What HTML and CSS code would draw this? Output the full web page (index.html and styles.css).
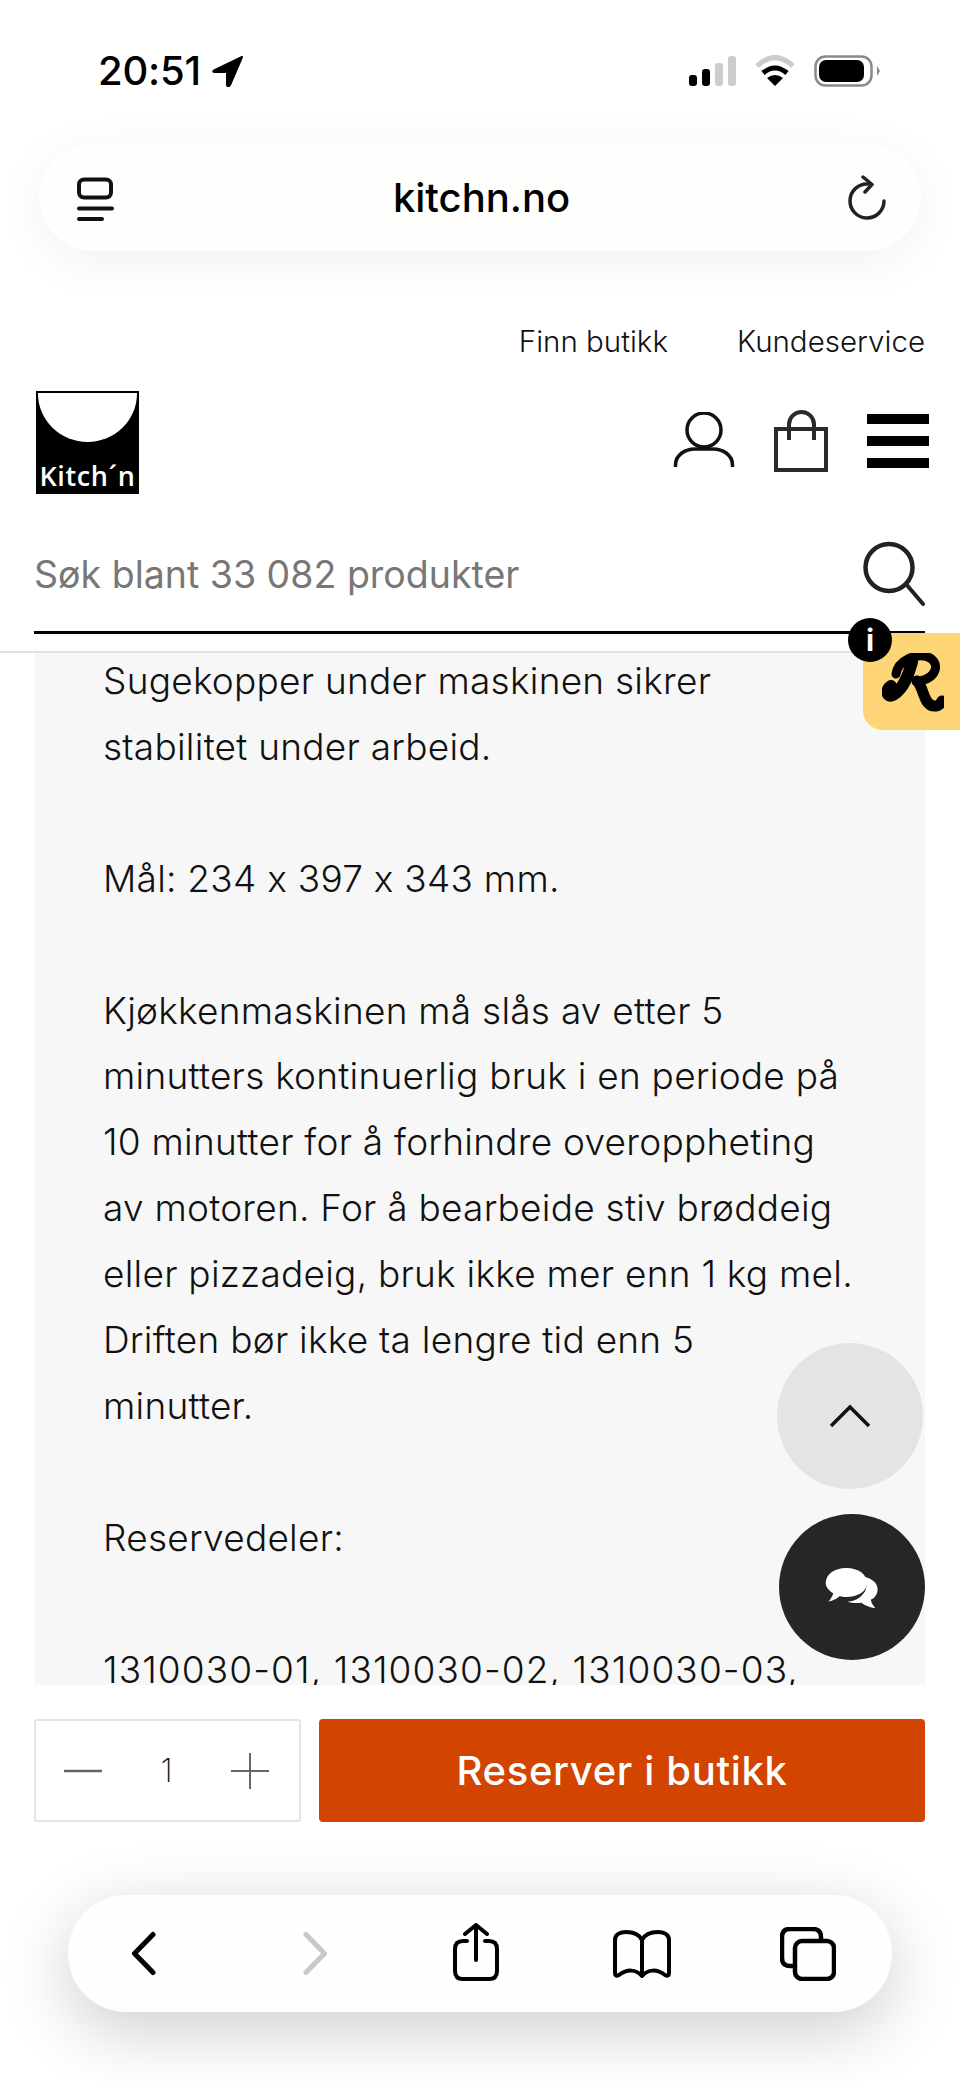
FILE: index.html
```html
<!DOCTYPE html>
<html lang="no">
<head>
  <meta charset="UTF-8" />
  <meta name="viewport" content="width=device-width, initial-scale=1.0" />
  <title>kitchn.no</title>
  <link rel="stylesheet" href="styles.css">
</head>
<body>
  <div class="phone">
    <div class="browser-top">
      <div class="status-bar">
        <div class="status-time">
          <span>20:51</span>
          <svg width="34" height="32" viewBox="0 0 34 32"><path d="M30 2 L2 15.5 Q0 17 3 17 L15 17 L15 30 Q16 33 18 30 Z" fill="#000" stroke="#000" stroke-width="2" stroke-linejoin="round"/></svg>
        </div>
        <div class="status-icons">
          <svg width="47" height="32" viewBox="0 0 47 32">
            <rect x="0" y="20" width="8" height="11" rx="3" fill="#000"/>
            <rect x="13" y="14" width="8" height="17" rx="3" fill="#000"/>
            <rect x="26" y="8" width="8" height="23" rx="3" fill="#ccc"/>
            <rect x="39" y="1" width="8" height="30" rx="3" fill="#ccc"/>
          </svg>
          <svg width="40" height="32" viewBox="0 0 40 32">
            <path d="M2 11 Q20 -6 38 11" fill="none" stroke="#ccc" stroke-width="5"/>
            <path d="M8 18 Q20 8 32 18" fill="none" stroke="#000" stroke-width="5"/>
            <path d="M20 31 L12 23 Q20 17 28 23 Z" fill="#000"/>
          </svg>
          <svg width="66" height="32" viewBox="0 0 66 32">
            <rect x="1.5" y="1.5" width="56" height="29" rx="10" fill="none" stroke="#8a8a8a" stroke-width="2.5"/>
            <rect x="5" y="5" width="45" height="22" rx="7" fill="#000"/>
            <path d="M63 11 L66 16 L63 21 Z" fill="#888"/>
          </svg>
        </div>
      </div>
      <div class="address-bar">
        <svg width="40" height="46" viewBox="0 0 40 46" fill="none" stroke="#111" stroke-width="4" stroke-linecap="round">
          <rect x="3" y="4.5" width="32" height="18" rx="5"/>
          <path d="M3 33.5 H36"/>
          <path d="M3 44 H26"/>
        </svg>
        <span class="address-text">kitchn.no</span>
        <svg width="40" height="46" viewBox="0 0 40 46" fill="none" stroke="#222" stroke-width="3.5" stroke-linecap="round" stroke-linejoin="round">
          <path d="M21 9 A17 17 0 1 0 37 26"/>
          <path d="M16 2 L25 9.5 L18 17"/>
        </svg>
      </div>
    </div>

    <header class="site-header">
      <nav class="util-links">
        <a>Finn butikk</a>
        <a>Kundeservice</a>
      </nav>
      <div class="main-row">
        <div class="logo">
          <div class="logo-bowl"></div>
          <span class="logo-text">Kitch´n</span>
        </div>
        <div class="header-icons">
          <svg width="62" height="58" viewBox="0 0 62 58" fill="none" stroke="#111" stroke-width="3.5">
            <circle cx="31" cy="18" r="17"/>
            <path d="M2.5 55 V53 C2.5 43 12 37 22 37 H40 C50 37 59.5 43 59.5 53 V55"/>
          </svg>
          <svg width="56" height="64" viewBox="0 0 56 64" fill="none" stroke="#2a2a2a" stroke-width="4">
            <rect x="3" y="20" width="50" height="41"/>
            <path d="M16 31 V15.5 A12.5 12.5 0 0 1 41 15.5 V31"/>
          </svg>
          <div class="burger"><i></i><i></i><i></i></div>
        </div>
      </div>
      <div class="search-row">
        <span class="search-text">Søk blant 33 082 produkter</span>
        <svg class="search-icon" width="66" height="66" viewBox="0 0 66 66" fill="none" stroke="#222" stroke-linecap="round">
          <circle cx="30" cy="26.5" r="23.5" stroke-width="4.5"/>
          <path d="M47 43 L64 63" stroke-width="4"/>
        </svg>
      </div>
    </header>

    <main class="content">
      <p class="description">Sugekopper under maskinen sikrer<br>stabilitet under arbeid.<br><br>Mål: 234 x 397 x 343 mm.<br><br>Kjøkkenmaskinen må slås av etter 5<br>minutters kontinuerlig bruk i en periode på<br>10 minutter for å forhindre overoppheting<br>av motoren. For å bearbeide stiv brøddeig<br>eller pizzadeig, bruk ikke mer enn 1 kg mel.<br>Driften bør ikke ta lengre tid enn 5<br>minutter.<br><br>Reservedeler:<br><br><span class="part-numbers">1310030-01, 1310030-02, 1310030-03,</span></p>
    </main>

    <div class="buy-row">
      <div class="qty">
        <svg width="40" height="40" viewBox="0 0 40 40" stroke="#666" stroke-width="2.5"><path d="M1 20 H39"/></svg>
        <span>1</span>
        <svg width="40" height="40" viewBox="0 0 40 40" stroke="#666" stroke-width="2"><path d="M1 20 H39 M20 2 V38"/></svg>
      </div>
      <button class="reserve">Reserver i butikk</button>
    </div>

    <div class="browser-bottom">
      <div class="tool-bar">
        <svg width="26" height="45" viewBox="0 0 26 45" fill="none" stroke="#000" stroke-width="5" stroke-linecap="round" stroke-linejoin="round"><path d="M22 3.5 L3.5 22.5 L22 41.5"/></svg>
        <svg class="tool-forward" width="26" height="45" viewBox="0 0 26 45" fill="none" stroke="#c8c8c8" stroke-width="5" stroke-linecap="round" stroke-linejoin="round"><path d="M4 3.5 L22.5 22.5 L4 41.5"/></svg>
        <svg class="tool-share" width="46" height="58" viewBox="0 0 46 58" fill="none" stroke="#000" stroke-width="4" stroke-linecap="round" stroke-linejoin="round"><path d="M14 18 H10 Q2 18 2 26 V48 Q2 56 10 56 H36 Q44 56 44 48 V26 Q44 18 36 18 H32"/><path d="M23 37 V3 M12 11 L23 2 L34 11"/></svg>
        <svg class="tool-book" width="58" height="48" viewBox="0 0 58 48" fill="none" stroke="#000" stroke-width="4" stroke-linejoin="round"><path d="M29 10 C26 4 19 2 13 2 C8 2 2 4 2 10 V43 Q2 47 6 45 C14 39 23 39 29 46 C35 39 44 39 52 45 Q56 47 56 43 V10 C56 4 50 2 45 2 C39 2 32 4 29 10 Z M29 10 V46"/></svg>
        <svg class="tool-tabs" width="56" height="54" viewBox="0 0 56 54" fill="none" stroke="#000" stroke-width="4.5"><path d="M13 39 H10 Q2 39 2 31 V10 Q2 2 10 2 H33 Q41 2 41 10 V14"/><rect x="15" y="14" width="39" height="38" rx="7"/></svg>
      </div>
    </div>

    <div class="rewards-tab">
      <svg width="62" height="60" viewBox="0 0 62 60" fill="none" stroke="#000" stroke-linecap="round">
        <path d="M30 9 C27 20 22 36 11 42 C5 45 3 37 9 33" stroke-width="12"/>
        <path d="M14 21 C16 7 34 0 46 4 C58 9 56 24 38 28" stroke-width="9"/>
        <path d="M35 28 C42 34 41 52 52 53 C56 53 58 52 60 48" stroke-width="11"/>
      </svg>
      <span class="rewards-info">i</span>
    </div>
    <div class="round-btn up-btn">
      <svg width="42" height="26" viewBox="0 0 42 26" fill="none" stroke="#111" stroke-width="3.5"><path d="M2 23 L21 4 L40 23"/></svg>
    </div>
    <div class="round-btn chat-btn">
      <svg class="chat-icon" width="56" height="45" viewBox="0 0 58 48" fill="#fff">
        <path d="M41 10 C52 12 58 19 56 27 C55 31 52 34 49 35 C50 39 52 42 54 44 C48 43 43 41 39 38 C34 39 28 38 24 37 C34 37 42 30 44 23 C45 18 44 14 41 10 Z"/>
        <path d="M23 1 C36 1 45 8 45 17 C45 26 35 32 23 32 C20 32 18 32 16 31 C12 35 7 36 4 37 C6 34 8 32 9 28 C4 25 1 21 1 17 C1 8 10 1 23 1 Z"/>
      </svg>
    </div>
  </div>
</body>
</html>
```

FILE: styles.css
```css
* {
  box-sizing: border-box;
}

html, body {
  margin: 0;
  padding: 0;
}

body {
  background: #fff;
  color: #111;
  font-family: "Inter", "Liberation Sans", sans-serif;
  font-feature-settings: "calt" 0;
}

svg {
  display: block;
  flex: none;
}

.phone {
  position: relative;
  width: 960px;
  height: 2081px;
  overflow: hidden;
  display: flex;
  flex-direction: column;
  background: #fff;
}

/* safari top */
.browser-top {
  height: 306px;
  padding: 0 39px;
}

.status-bar {
  height: 144px;
  display: flex;
  justify-content: space-between;
  padding: 55px 41px 0 59px;
  align-items: flex-start;
}

.status-time {
  display: flex;
  align-items: center;
  gap: 11px;
  font-size: 40px;
  font-weight: 550;
  line-height: 32px;
  color: #000;
  letter-spacing: -0.2px;
}

.status-icons {
  display: flex;
  align-items: center;
  gap: 19px;
}

.address-bar {
  height: 107px;
  width: 882px;
  background: #fefefd;
  border-radius: 54px;
  display: flex;
  align-items: center;
  justify-content: space-between;
  padding: 0 34px 0 37px;
  box-shadow: 0 10px 50px rgba(0, 0, 0, 0.06);
}

.address-text {
  font-size: 40px;
  font-weight: 450;
  color: #000;
}

/* site header */
.site-header {
  height: 347px;
  padding: 0 35px 0 34px;
  border-bottom: 2px solid #e2e2e2;
  display: flex;
  flex-direction: column;
}

.util-links {
  display: flex;
  justify-content: flex-end;
  gap: 69px;
  font-size: 29.5px;
  font-weight: 280;
  line-height: 40px;
  padding-top: 15px;
}

.main-row {
  display: flex;
  justify-content: space-between;
  align-items: flex-start;
  padding-top: 30px;
}

.logo {
  width: 103px;
  height: 103px;
  margin-left: 2px;
  background: #000;
  border: 2px solid #000;
  overflow: hidden;
  position: relative;
  display: flex;
  align-items: flex-end;
  justify-content: center;
}

.logo-bowl {
  position: absolute;
  top: 0;
  left: 0;
  width: 99px;
  height: 49px;
  background: #fff;
  border-radius: 0 0 50px 50px / 0 0 49px 49px;
}

.logo-text {
  color: #fff;
  font-family: "Open Sans", sans-serif;
  font-size: 27px;
  font-weight: 600;
  line-height: 32px;
  letter-spacing: 0.6px;
  white-space: nowrap;
}

.header-icons {
  display: flex;
  align-items: center;
  gap: 38px;
  padding-top: 18px;
  margin-right: -4px;
}

.burger {
  width: 62px;
  display: flex;
  flex-direction: column;
  gap: 12px;
}

.burger i {
  display: block;
  height: 10px;
  background: #000;
}

.search-row {
  margin-top: 42px;
  height: 98px;
  border-bottom: 3px solid #000;
  display: flex;
  justify-content: space-between;
  align-items: flex-start;
}

.search-text {
  color: #777;
  font-size: 37.5px;
  line-height: 76px;
  font-weight: 400;
  padding-top: 1px;
}

.search-icon {
  margin-top: 5px;
}

/* description */
.content {
  margin: 0 35px 0 34px;
  height: 1032px;
  flex: none;
  overflow: hidden;
  background: #f7f7f7;
  padding-left: 69px;
}

.description {
  margin: -5px 0 0;
  font-size: 37px;
  font-weight: 280;
  line-height: 65.9px;
  letter-spacing: 0.25px;
  color: #111;
  white-space: nowrap;
}

.part-numbers {
  letter-spacing: 1.1px;
}

/* buy row */
.buy-row {
  display: flex;
  gap: 18px;
  margin: 34px 35px 0 34px;
  height: 103px;
}

.qty {
  width: 267px;
  border: 2px solid #e4e4e4;
  border-radius: 3px;
  display: flex;
  align-items: center;
  justify-content: space-between;
  padding: 0 29px 0 27px;
  font-size: 32px;
  font-weight: 200;
}

.reserve {
  flex: 1;
  border: none;
  border-radius: 4px;
  background: #d24400;
  color: #fff;
  font-family: inherit;
  font-size: 40px;
  font-weight: 450;
  letter-spacing: 0.65px;
}

/* safari bottom */
.browser-bottom {
  flex: 1;
  padding: 73px 68px 0;
}

.tool-bar {
  height: 117px;
  background: #fefefd;
  border-radius: 58px;
  display: flex;
  align-items: center;
  padding-left: 63px;
  box-shadow: 0 18px 70px rgba(0, 0, 0, 0.2);
}

.tool-forward {
  margin-left: 145px;
}

.tool-share {
  margin: -4px 0 0 125px;
}

.tool-book {
  margin-left: 114px;
}

.tool-tabs {
  margin-left: 109px;
}

/* floating bits */
.rewards-tab {
  position: absolute;
  left: 863px;
  top: 633px;
  width: 97px;
  height: 97px;
  background: #fdd576;
  border-radius: 0 0 0 20px;
  padding: 20px 0 0 19px;
}

.rewards-info {
  position: absolute;
  left: -15px;
  top: -15px;
  width: 44px;
  height: 44px;
  border-radius: 50%;
  background: #000;
  color: #fff;
  font-size: 30px;
  font-weight: 700;
  line-height: 44px;
  text-align: center;
}

.round-btn {
  position: absolute;
  width: 146px;
  height: 146px;
  border-radius: 50%;
  display: flex;
  align-items: center;
  justify-content: center;
}

.up-btn {
  left: 777px;
  top: 1343px;
  background: #e4e4e4;
}

.chat-btn {
  left: 779px;
  top: 1514px;
  background: #262626;
}

.chat-icon {
  margin-top: 4px;
}
```
